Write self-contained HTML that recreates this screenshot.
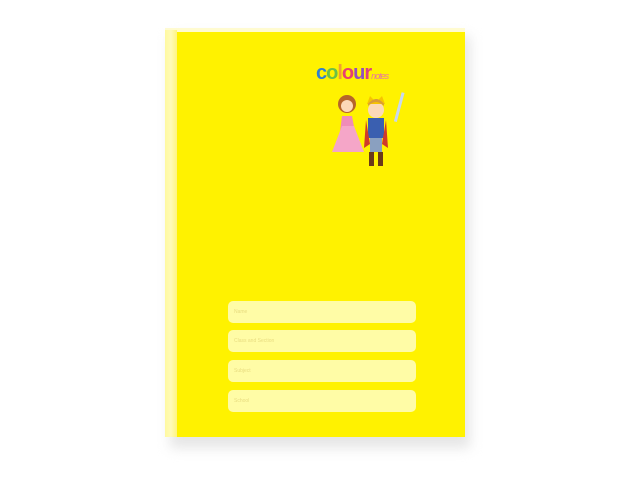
<!DOCTYPE html>
<html><head><style>
body{margin:0;width:640px;height:480px;background:#fff;position:relative;overflow:hidden;font-family:"Liberation Sans",sans-serif}
.shadow{position:absolute;left:170px;top:36px;width:300px;height:412px;background:#e6e6e6;filter:blur(6px)}
.book{position:absolute;left:165px;top:30px;width:300px;height:407px;background:#fff200}
.top{position:absolute;left:165px;top:28px;width:300px;height:4px;background:#fffbd0}
.spine{position:absolute;left:165px;top:30px;width:12px;height:407px;background:linear-gradient(90deg,#fff9a0,#fffbb8 50%,#fff480)}
.f{position:absolute;left:228px;width:188px;height:22px;background:#fffca6;border-radius:5px;font-size:5px;color:#e8dc80;line-height:22px;padding-left:6px;box-sizing:border-box}
.logo{position:absolute;left:316px;top:62px;font-weight:bold;font-size:20px;letter-spacing:-1px}
</style></head><body>
<div class="shadow"></div>
<div class="book"></div>
<div class="top"></div>
<div class="spine"></div>
<div class="logo"><span style="color:#2f7fd0">c</span><span style="color:#6ac048">o</span><span style="color:#f0a030">l</span><span style="color:#e84070">o</span><span style="color:#9050c0">u</span><span style="color:#e04080">r</span><span style="font-size:9px;color:#e878a0;font-style:italic;font-weight:normal">notes</span></div>
<svg style="position:absolute;left:320px;top:86px" width="90" height="86">
<circle cx="27" cy="18" r="9" fill="#b5652a"/><circle cx="27" cy="20" r="6" fill="#fcd9b8"/>
<path d="M18 62 L22 30 L32 30 L38 62 Z" fill="#f08cb8"/>
<path d="M12 66 L22 40 L34 40 L44 66 Z" fill="#f5a6c8"/>
<circle cx="56" cy="24" r="8" fill="#fcd9b8"/><path d="M47 18 L50 10 L56 16 L62 10 L65 18 Z" fill="#f7c400"/>
<path d="M48 20 Q56 12 64 20 L64 18 Q56 8 48 18Z" fill="#d89a3a"/>
<rect x="48" y="32" width="16" height="20" fill="#3a5fb0"/>
<path d="M46 34 L44 62 L50 58 Z M66 34 L68 62 L62 58Z" fill="#d03a2a"/>
<rect x="50" y="52" width="12" height="14" fill="#8aa0c0"/>
<rect x="49" y="66" width="5" height="14" fill="#6a3a1a"/><rect x="58" y="66" width="5" height="14" fill="#6a3a1a"/>
<rect x="78" y="6" width="3" height="30" fill="#c8d8f0" transform="rotate(15 79 20)"/>
</svg>
<div class="f" style="top:301px">Name</div>
<div class="f" style="top:330px">Class and Section</div>
<div class="f" style="top:360px">Subject</div>
<div class="f" style="top:390px">School</div>
</body></html>
